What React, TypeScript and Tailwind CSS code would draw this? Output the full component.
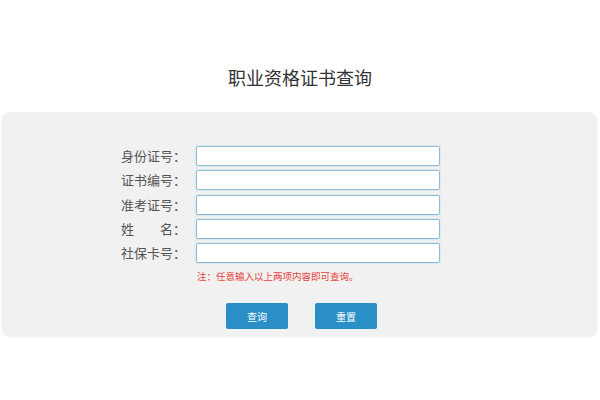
const fields = [
  { label: "身份证号：" },
  { label: "证书编号：" },
  { label: "准考证号：" },
  { label: "姓　　名：" },
  { label: "社保卡号：" },
];

export default function App() {
  return (
    <div
      className="h-[400px] w-[600px] overflow-hidden bg-white"
      style={{ fontFamily: '"Noto Sans CJK SC", "Noto Sans", sans-serif' }}
    >
      <h1 className="pt-[66px] text-center text-[18px] leading-[22px] text-[#333]">职业资格证书查询</h1>

      <div className="mx-[2px] mt-[24px] h-[224px] w-[595px] rounded-lg bg-[#f1f1f1] pt-[34px] shadow-[0_1px_2px_rgba(0,0,0,0.08)]">
        <div className="flex flex-col gap-[4.3px] pl-[100px]">
          {fields.map((f) => (
            <div key={f.label} className="flex items-center">
              <label className="w-[84px] text-right text-[13px] leading-[20px] text-[#555]">{f.label}</label>
              <input
                type="text"
                className="ml-[10px] h-[20px] w-[244px] rounded-[2px] border border-[#8dbdd2] bg-white shadow-[0_0_2px_rgba(120,190,220,0.5)] outline-none"
              />
            </div>
          ))}
        </div>

        <p className="mt-[6px] pl-[195px] text-[9.5px] leading-[14px] text-[#e8413a]">
          注：任意输入以上两项内容即可查询。
        </p>

        <div className="mt-[20px] flex justify-center gap-[27px] pl-[4px]">
          <button className="h-[26px] w-[62px] rounded-[2px] bg-[#2a8fc6] text-[10px] text-white">查询</button>
          <button className="h-[26px] w-[62px] rounded-[2px] bg-[#2a8fc6] text-[10px] text-white">重置</button>
        </div>
      </div>
    </div>
  );
}
